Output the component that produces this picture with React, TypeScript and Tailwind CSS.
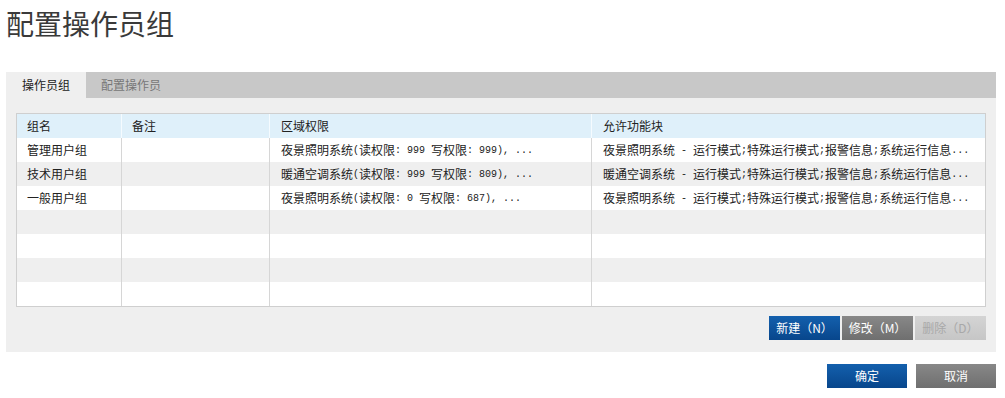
const font = { fontFamily: '"Noto Sans CJK SC", "Noto Sans", sans-serif' }

// ASCII runs are drawn narrow and monospaced, like the bitmap font in the original
function Mixed({ text }: { text: string }) {
  const parts = text.match(/[\x20-\x7e]+|[^\x20-\x7e]+/g) ?? []
  return (
    <>
      {parts.map((p, i) =>
        /^[\x20-\x7e]+$/.test(p) ? (
          <span key={i} className="text-[10px] whitespace-pre" style={{ fontFamily: '"Liberation Mono", monospace' }}>
            {p}
          </span>
        ) : (
          <span key={i}>{p}</span>
        )
      )}
    </>
  )
}

const rows = [
  {
    name: '管理用户组',
    note: '',
    area: '夜景照明系统(读权限: 999 写权限: 999), ...',
    funcs: '夜景照明系统 - 运行模式;特殊运行模式;报警信息;系统运行信息...',
  },
  {
    name: '技术用户组',
    note: '',
    area: '暖通空调系统(读权限: 999 写权限: 809), ...',
    funcs: '暖通空调系统 - 运行模式;特殊运行模式;报警信息;系统运行信息...',
  },
  {
    name: '一般用户组',
    note: '',
    area: '夜景照明系统(读权限: 0 写权限: 687), ...',
    funcs: '夜景照明系统 - 运行模式;特殊运行模式;报警信息;系统运行信息...',
  },
  { name: '', note: '', area: '', funcs: '' },
  { name: '', note: '', area: '', funcs: '' },
  { name: '', note: '', area: '', funcs: '' },
  { name: '', note: '', area: '', funcs: '' },
]

export default function App() {
  return (
    <div className="w-[1005px] h-[398px] bg-white text-[#333] overflow-hidden" style={font}>
      {/* Title */}
      <h1 className="pl-[6px] pt-[3px] h-[72px] text-[28px] leading-[40px] font-normal text-[#3a3a3a]">
        配置操作员组
      </h1>

      <div className="mx-[6px] w-[990px]">
        {/* Tabs */}
        <div className="flex h-[26px] bg-[#c8c8c8] text-[12px]">
          <div className="w-[80px] bg-[#efefef] flex items-center justify-center text-[#222]">操作员组</div>
          <div className="w-[90px] flex items-center justify-center text-[#777]">配置操作员</div>
        </div>

        {/* Panel */}
        <div className="bg-[#efefef] h-[254px] pt-[15px] px-[10px]">
          <div className="w-[970px] border border-[#cfcfcf] bg-white text-[12px]">
            <div className="flex h-[24px] bg-[#dff0fa] text-[#222]">
              <div className="w-[105px] pl-[10px] flex items-center border-r border-[#f5fbff]">组名</div>
              <div className="w-[148px] pl-[10px] flex items-center border-r border-[#f5fbff]">备注</div>
              <div className="w-[322px] pl-[11px] flex items-center border-r border-[#f5fbff]">区域权限</div>
              <div className="flex-1 pl-[11px] flex items-center">允许功能块</div>
            </div>
            {rows.map((r, i) => (
              <div key={i} className={`flex h-[24px] text-[#222] ${i % 2 === 1 ? 'bg-[#efefef]' : 'bg-white'}`}>
                <div className="w-[105px] pl-[10px] flex items-center border-r border-[#d6d6d6]">{r.name}</div>
                <div className="w-[148px] pl-[10px] flex items-center border-r border-[#d6d6d6]">{r.note}</div>
                <div className="w-[322px] pl-[11px] flex items-center border-r border-[#d6d6d6] whitespace-nowrap overflow-hidden">
                  <Mixed text={r.area} />
                </div>
                <div className="flex-1 pl-[11px] flex items-center whitespace-nowrap overflow-hidden">
                  <Mixed text={r.funcs} />
                </div>
              </div>
            ))}
          </div>

          <div className="flex justify-end gap-[2px] mt-[9px] text-[12px]">
            <button className="w-[71px] h-[24px] bg-gradient-to-b from-[#1460ad] to-[#08468c] text-white">新建（N）</button>
            <button className="w-[71px] h-[24px] bg-gradient-to-b from-[#888] to-[#6f6f6f] text-white">修改（M）</button>
            <button className="w-[71px] h-[24px] bg-gradient-to-b from-[#d4d4d4] to-[#c6c6c6] text-[#a8a8a8]">删除（D）</button>
          </div>
        </div>

        {/* Footer */}
        <div className="flex justify-end gap-[9px] mt-[12px] text-[12px]">
          <button className="w-[80px] h-[24px] bg-gradient-to-b from-[#1460ad] to-[#08468c] text-white">确定</button>
          <button className="w-[80px] h-[24px] bg-gradient-to-b from-[#888] to-[#6f6f6f] text-white">取消</button>
        </div>
      </div>
    </div>
  )
}
